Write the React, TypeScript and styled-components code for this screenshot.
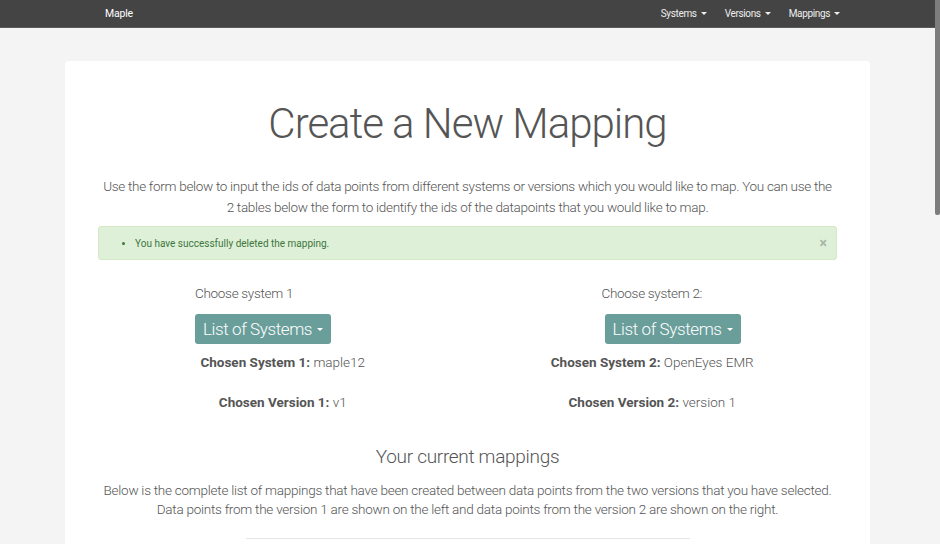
import React from 'react';
import styled, { createGlobalStyle } from 'styled-components';

const GlobalStyle = createGlobalStyle`
  html, body {
    margin: 0;
    padding: 0;
    height: 100%;
    overflow: hidden;
    background-color: #f4f4f4;
  }
  body {
    font-family: "Helvetica Neue", Roboto, "Liberation Sans", sans-serif;
    font-weight: 300;
    color: #555;
  }
`;

const Page = styled.div`
  min-height: 100vh;
  background-color: #f4f4f4;
`;

const Navbar = styled.nav`
  height: 28px;
  background-color: #444;
  border-bottom: 1px solid #5a5a5a;
  display: flex;
  align-items: center;
  justify-content: space-between;
  padding: 0 100px 0 105px;
  box-sizing: border-box;
`;

const Brand = styled.a`
  color: #fff;
  font-size: 10.5px;
  font-weight: 400;
  letter-spacing: -0.2px;
  text-decoration: none;
`;

const NavMenu = styled.ul`
  display: flex;
  gap: 18px;
  list-style: none;
  margin: 0;
  padding: 0;
`;

const NavItem = styled.li`
  color: #eee;
  font-size: 10px;
  font-weight: 400;
  letter-spacing: -0.35px;
  display: flex;
  align-items: center;
  gap: 4px;
`;

const Caret = styled.span<{ $size?: number }>`
  display: inline-block;
  width: 0;
  height: 0;
  border-left: ${({ $size = 3 }) => $size}px solid transparent;
  border-right: ${({ $size = 3 }) => $size}px solid transparent;
  border-top: ${({ $size = 3 }) => $size}px solid currentColor;
`;

const Main = styled.main`
  padding: 33px 0 0 65px;
`;

const Card = styled.section`
  width: 805px;
  background-color: #fff;
  border-radius: 4px;
  padding: 40px 33px 40px;
  box-sizing: border-box;
  text-align: center;
`;

const Title = styled.h1`
  font-size: 42px;
  font-weight: 300;
  letter-spacing: -1px;
  color: #555;
  margin: 0 0 29px;
  line-height: 46px;
`;

const Lead = styled.p<{ $lineHeight: number; $spacing: number }>`
  font-size: 13.5px;
  letter-spacing: ${({ $spacing }) => $spacing}px;
  line-height: ${({ $lineHeight }) => $lineHeight}px;
  margin: 0;
  color: #555;
`;

const Alert = styled.div`
  margin-top: 8px;
  background-color: #dff0d8;
  border: 1px solid #d6e9c6;
  border-radius: 3px;
  color: #3c763d;
  font-size: 10px;
  font-weight: 400;
  height: 34px;
  box-sizing: border-box;
  display: flex;
  align-items: center;
  justify-content: space-between;
  padding: 0 9px 0 25px;
  text-align: left;
`;

const AlertList = styled.ul`
  margin: 0;
  padding-left: 11px;
`;

const Close = styled.span`
  color: #a9b8a6;
  font-size: 14px;
  font-weight: 700;
`;

const Columns = styled.div`
  display: grid;
  grid-template-columns: 1fr 1fr;
  margin-top: 23px;
`;

const Column = styled.div`
  display: flex;
  flex-direction: column;
`;

const Indent = styled.div<{ $left: number }>`
  text-align: left;
  padding-left: ${({ $left }) => $left}px;
`;

const Label = styled.div`
  font-size: 13.5px;
  letter-spacing: -0.3px;
  line-height: 20px;
  color: #555;
`;

const DropButton = styled.button`
  margin-top: 11px;
  height: 30px;
  padding: 0 8px;
  background-color: #6a9e9b;
  color: #fff;
  border: none;
  border-radius: 3px;
  font-family: inherit;
  font-weight: 300;
  font-size: 17px;
  letter-spacing: -0.4px;
  display: inline-flex;
  align-items: center;
  gap: 5px;
`;

const Chosen = styled.div<{ $top: number }>`
  margin-top: ${({ $top }) => $top}px;
  font-size: 13.5px;
  letter-spacing: 0;
  line-height: 20px;
  color: #555;

  b {
    font-weight: 700;
  }
`;

const SubTitle = styled.h2`
  font-size: 19px;
  font-weight: 300;
  letter-spacing: -0.3px;
  color: #555;
  margin: 31px 0 10px;
  line-height: 28px;
`;

const Rule = styled.hr`
  width: 444px;
  margin: 19px auto 0;
  border: none;
  border-top: 1px solid #e5e5e5;
`;

const Scrollbar = styled.div`
  position: fixed;
  top: 0;
  right: 0;
  width: 5px;
  height: 215px;
  background-color: #7d7d7d;
  border-radius: 0 0 2px 2px;
`;

const systems = [
  { label: 'Choose system 1', indent: 97, btnIndent: 97, system: 'maple12', version: 'v1', n: 1 },
  { label: 'Choose system 2:', indent: 134, btnIndent: 137, system: 'OpenEyes EMR', version: 'version 1', n: 2 },
];

const App: React.FC = () => {
  return (
    <Page>
      <GlobalStyle />
      <Navbar>
        <Brand>Maple</Brand>
        <NavMenu>
          {['Systems', 'Versions', 'Mappings'].map((item) => (
            <NavItem key={item}>
              {item} <Caret />
            </NavItem>
          ))}
        </NavMenu>
      </Navbar>
      <Main>
        <Card>
          <Title>Create a New Mapping</Title>
          <Lead $lineHeight={21} $spacing={-0.3}>
            Use the form below to input the ids of data points from different systems or versions which you would like to map. You can use the
            <br />
            2 tables below the form to identify the ids of the datapoints that you would like to map.
          </Lead>
          <Alert>
            <AlertList>
              <li>You have successfully deleted the mapping.</li>
            </AlertList>
            <Close>×</Close>
          </Alert>
          <Columns>
            {systems.map((s) => (
              <Column key={s.n}>
                <Indent $left={s.indent}>
                  <Label>{s.label}</Label>
                </Indent>
                <Indent $left={s.btnIndent}>
                  <DropButton>
                    List of Systems <Caret $size={3} />
                  </DropButton>
                </Indent>
                <Chosen $top={8}>
                  <b>Chosen System {s.n}:</b> {s.system}
                </Chosen>
                <Chosen $top={20}>
                  <b>Chosen Version {s.n}:</b> {s.version}
                </Chosen>
              </Column>
            ))}
          </Columns>
          <SubTitle>Your current mappings</SubTitle>
          <Lead $lineHeight={19} $spacing={-0.25}>
            Below is the complete list of mappings that have been created between data points from the two versions that you have selected.
            <br />
            Data points from the version 1 are shown on the left and data points from the version 2 are shown on the right.
          </Lead>
          <Rule />
        </Card>
      </Main>
      <Scrollbar />
    </Page>
  );
};

export default App;
